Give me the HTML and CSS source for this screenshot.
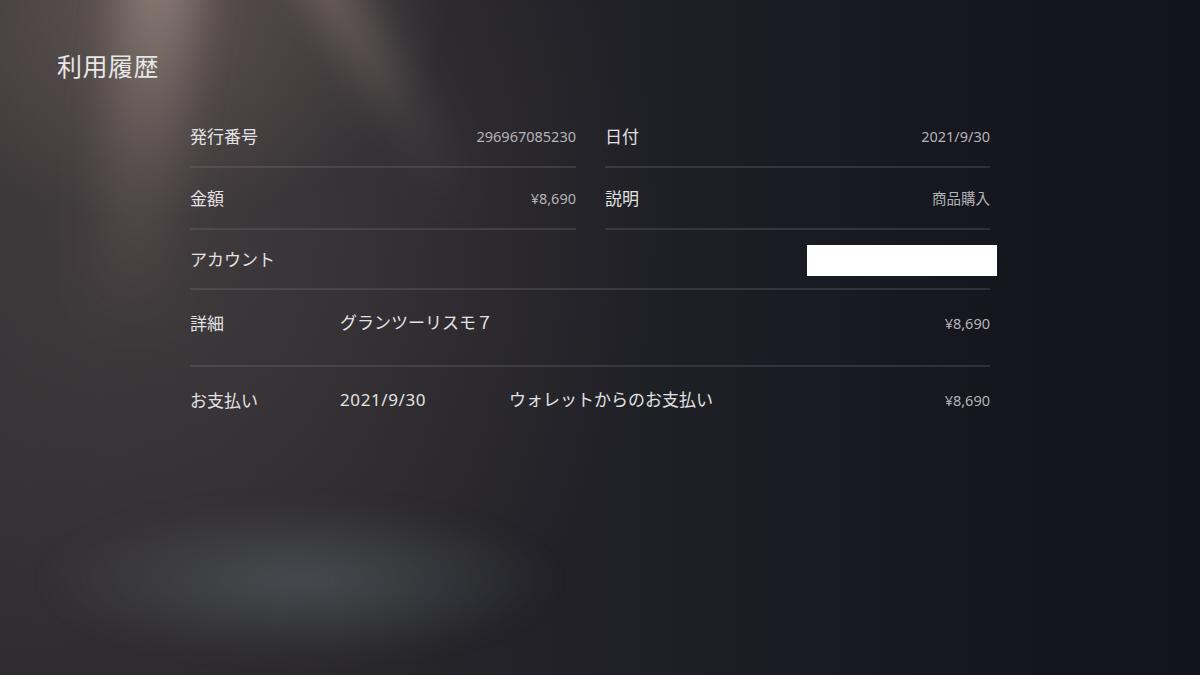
FILE: index.html
```html
<!DOCTYPE html>
<html lang="ja">
<head>
<meta charset="utf-8">
<title>利用履歴</title>
<link rel="stylesheet" href="styles.css">
</head>
<body>
<div class="screen">
  <div class="beam beam-a"></div>
  <div class="beam beam-b"></div>
  <div class="glow"></div>
  <h1 class="title">利用履歴</h1>
  <div class="table">
    <div class="pair">
      <div class="cell"><span class="label">発行番号</span><span class="value">296967085230</span></div>
      <div class="cell"><span class="label">日付</span><span class="value">2021/9/30</span></div>
      <div class="cell"><span class="label">金額</span><span class="value">¥8,690</span></div>
      <div class="cell"><span class="label">説明</span><span class="value">商品購入</span></div>
    </div>
    <div class="cell wide"><span class="label">アカウント</span><span class="redact"></span></div>
    <div class="line detail">
      <span class="label col1">詳細</span>
      <span class="text col2">グランツーリスモ７</span>
      <span class="value end">¥8,690</span>
    </div>
    <div class="line pay">
      <span class="label col1">お支払い</span>
      <span class="text col2 date">2021/9/30</span>
      <span class="text col3">ウォレットからのお支払い</span>
      <span class="value end">¥8,690</span>
    </div>
  </div>
</div>
</body>
</html>
```
FILE: styles.css
```css
html, body {
  margin: 0;
  padding: 0;
}
body {
  width: 1200px;
  height: 675px;
  overflow: hidden;
  font-family: "Noto Sans", "Noto Sans CJK JP", sans-serif;
  background: #1a1a21;
}
.screen {
  position: relative;
  width: 1200px;
  height: 675px;
  overflow: hidden;
  background:
    radial-gradient(ellipse 300px 220px at 150px 0px, rgba(150,130,120,0.40), rgba(150,130,120,0) 100%),
    radial-gradient(ellipse 520px 560px at 140px 220px, rgba(85,75,75,0.55), rgba(85,75,75,0) 100%),
    linear-gradient(90deg, #2c2a2e 0%, #27262b 30%, #1f1f26 55%, #16171f 78%, #12131b 100%);
}
.beam {
  position: absolute;
  pointer-events: none;
  filter: blur(20px);
}
.beam-a {
  left: 105px;
  top: -80px;
  width: 80px;
  height: 420px;
  background: linear-gradient(180deg, rgba(175,155,145,0.6), rgba(175,155,145,0.15) 60%, rgba(175,155,145,0));
  transform: rotate(6deg);
}
.beam-b {
  left: 365px;
  top: -70px;
  width: 40px;
  height: 300px;
  background: linear-gradient(180deg, rgba(170,150,140,0.55), rgba(170,150,140,0.1) 70%, rgba(170,150,140,0));
  transform: rotate(-32deg);
}
.glow {
  position: absolute;
  left: 40px;
  top: 500px;
  width: 520px;
  height: 160px;
  pointer-events: none;
  background: radial-gradient(ellipse 50% 50% at 50% 50%, rgba(95,105,110,0.5), rgba(95,105,110,0));
  filter: blur(10px);
}
.title {
  position: relative;
  margin: 0;
  padding: 48px 0 0 57px;
  font-family: "Noto Sans CJK JP", sans-serif;
  font-size: 25px;
  font-weight: 400;
  line-height: 34px;
  color: #e6e6e6;
  letter-spacing: 0.5px;
}
.table {
  position: relative;
  width: 800px;
  margin: 24px 0 0 190px;
}
.pair {
  display: grid;
  grid-template-columns: 386px 385px;
  column-gap: 29px;
}
.cell {
  display: flex;
  align-items: center;
  justify-content: space-between;
  min-width: 0;
  height: 60px;
  border-bottom: 2px solid rgba(120,120,130,0.28);
}
.cell.wide {
  height: 58px;
}
.label {
  font-family: "Noto Sans CJK JP", sans-serif;
  font-size: 17px;
  color: #e2e2e2;
  line-height: 24px;
}
.value {
  font-size: 14.5px;
  color: #b4b4b8;
  line-height: 20px;
  white-space: nowrap;
}
.redact {
  width: 190px;
  height: 31px;
  background: #ffffff;
  margin-right: -7px;
  margin-top: 2px;
}
.line {
  display: flex;
  align-items: flex-start;
  padding-top: 21px;
}
.line.detail {
  height: 54px;
  border-bottom: 2px solid rgba(120,120,130,0.28);
}
.line.pay {
  padding-top: 21px;
  height: 50px;
}
.col1 {
  width: 150px;
}
.text {
  font-size: 17px;
  color: #e2e2e2;
  line-height: 24px;
}
.date {
  letter-spacing: 0.6px;
}
.col2 {
  width: 169px;
}
.end {
  margin-left: auto;
  margin-top: 2px;
}
```
